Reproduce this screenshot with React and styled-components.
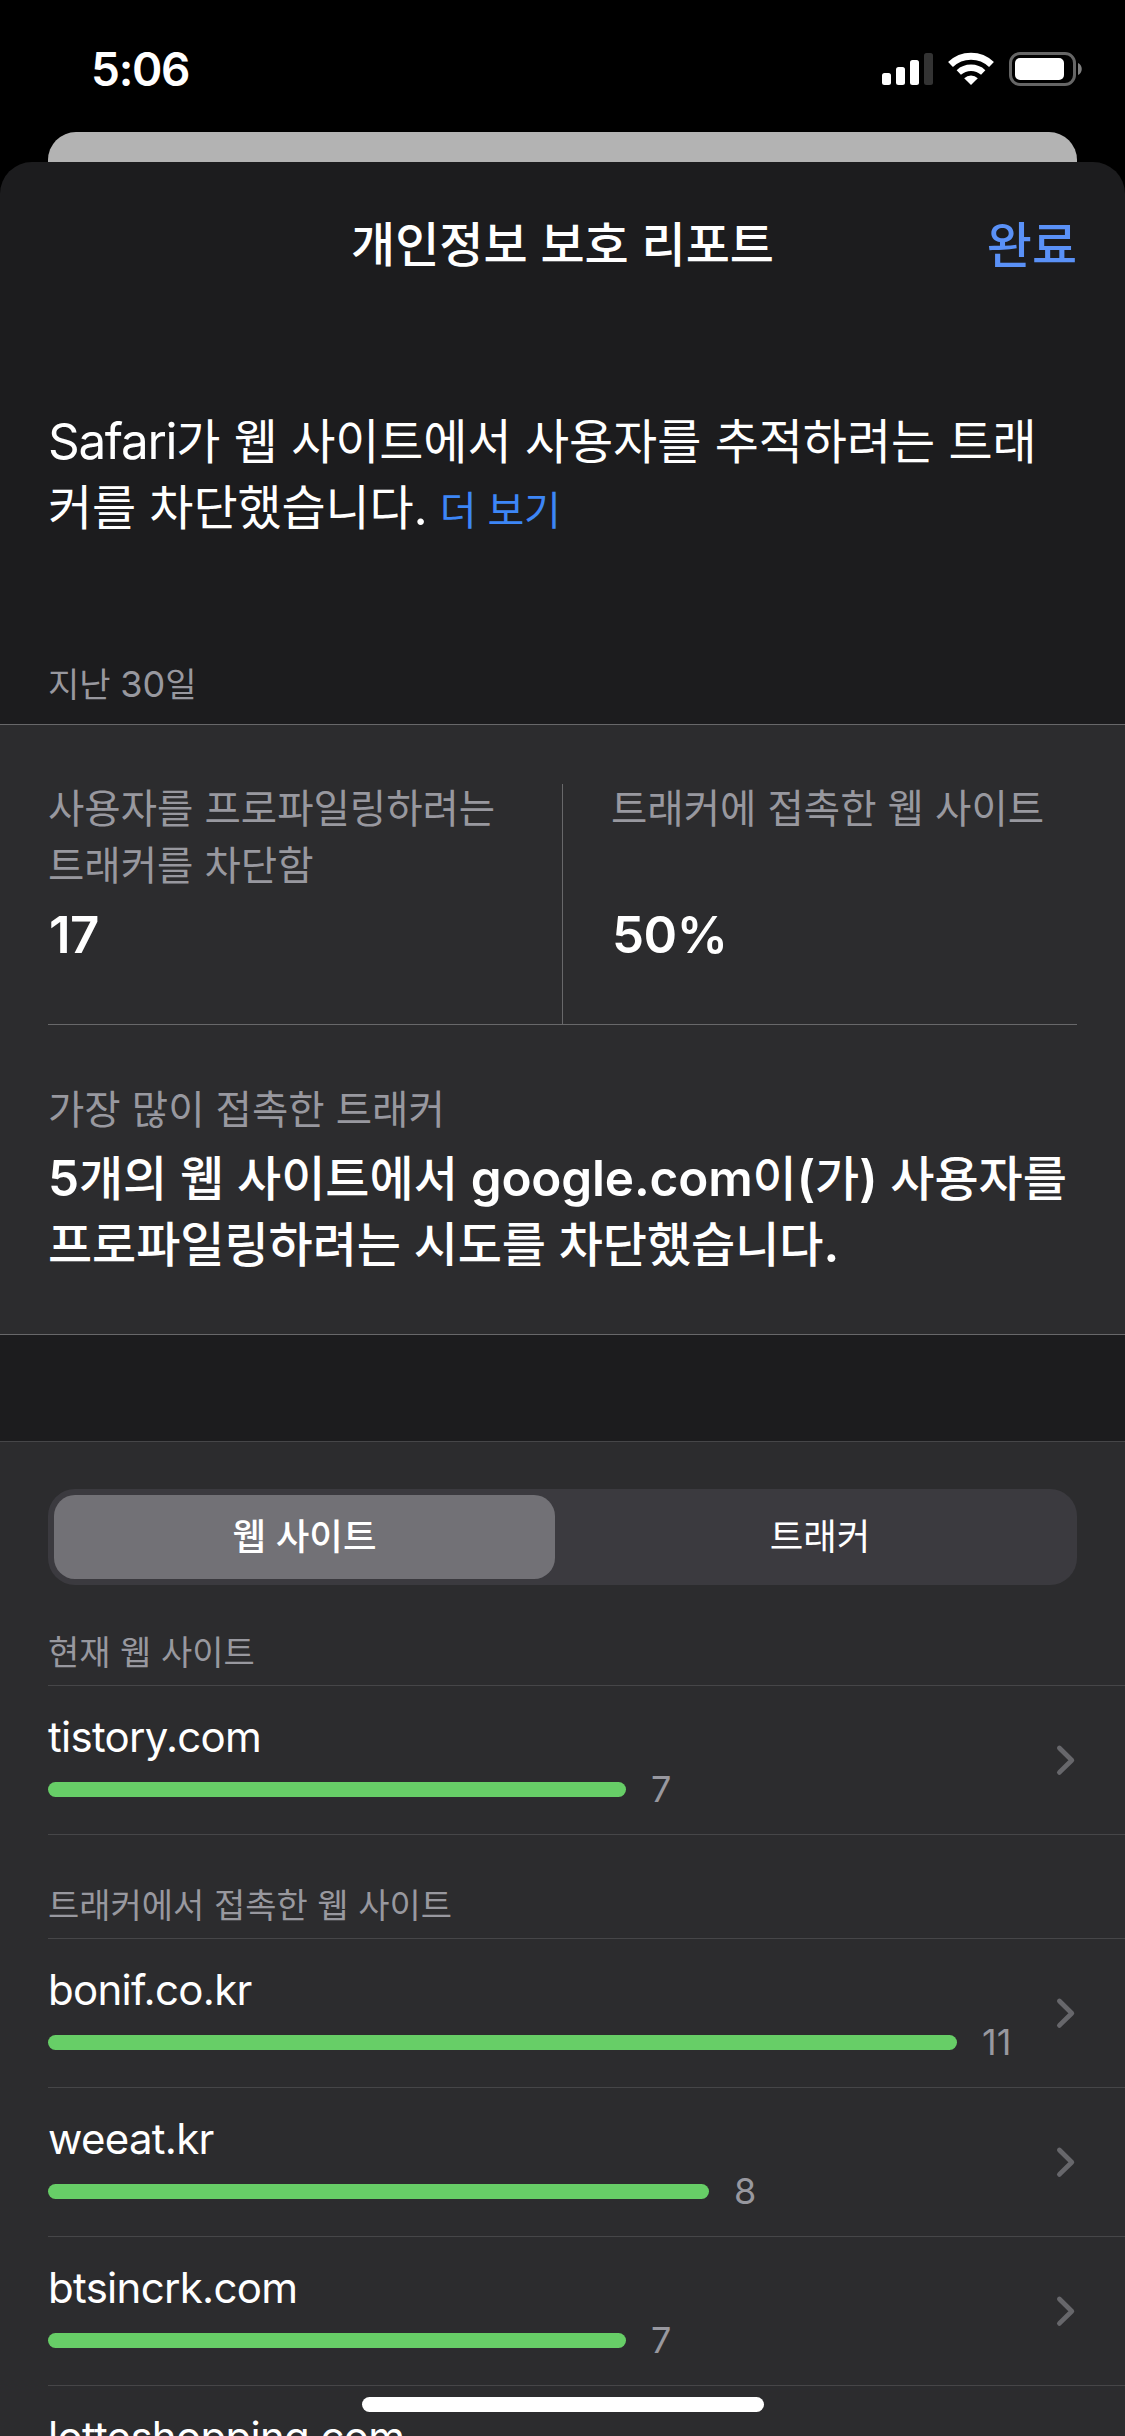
import React from "react";
import styled, { createGlobalStyle } from "styled-components";

const GlobalStyle = createGlobalStyle`
  * { box-sizing: border-box; }
  html, body { margin: 0; padding: 0; background: #000; }
  body {
    font-family: "Inter", "Noto Sans CJK KR", sans-serif;
    color: #fff;
    -webkit-font-smoothing: antialiased;
  }
`;

const Screen = styled.div`
  position: relative;
  width: 1125px;
  height: 2436px;
  overflow: hidden;
  background: #000;
  display: flex;
  flex-direction: column;
`;

const StatusBar = styled.header`
  height: 132px;
  flex: none;
  padding: 41px 43px 0 91px;
  display: flex;
  justify-content: space-between;
  align-items: flex-start;
`;

const Clock = styled.span`
  font-size: 46px;
  line-height: 56px;
  font-weight: 600;
  letter-spacing: -1.3px;
`;

const StatusIcons = styled.svg`
  display: block;
  width: 201px;
  height: 36px;
  margin-top: 10px;
`;

const BackCard = styled.div`
  height: 30px;
  flex: none;
  margin: 0 48px;
  border-radius: 28px 28px 0 0;
  background: #b3b3b3;
`;

const Sheet = styled.main`
  flex: 1;
  border-radius: 32px 32px 0 0;
  background: #1c1c1e;
  overflow: hidden;
`;

const SheetHeader = styled.div`
  display: grid;
  grid-template-columns: 1fr auto 1fr;
  padding: 53px 48px 0;
  height: 168px;
`;

const Title = styled.h1`
  grid-column: 2;
  margin: 0;
  font-size: 48px;
  line-height: 60px;
  font-weight: 500;
  white-space: nowrap;
`;

const DoneButton = styled.button`
  justify-self: end;
  align-self: start;
  padding: 0;
  border: 0;
  background: none;
  font-family: inherit;
  font-size: 49px;
  line-height: 62px;
  font-weight: 500;
  color: #5a91f7;
`;

const LatinRun = styled.span`
  font-size: 1.03em;
  line-height: 0;
  letter-spacing: -0.027em;
`;

const Line = styled.span`
  display: block;
  white-space: nowrap;
  letter-spacing: ${(p) => p.$tracking || 0}px;
`;

const Intro = styled.p`
  margin: 79px 48px 0;
  font-size: 48px;
  line-height: 66px;
`;

const MoreLink = styled.a`
  font-size: 40px;
  line-height: 0;
  color: #3d86f6;
`;

const PeriodLabel = styled.h2`
  margin: 122px 48px 17px;
  font-size: 34px;
  line-height: 44px;
  font-weight: 400;
  color: #98989f;

  ${LatinRun} {
    font-size: 1.06em;
    letter-spacing: 0;
  }
`;

const Summary = styled.section`
  border-top: 1px solid #68686a;
  border-bottom: 1px solid #68686a;
  background: #2c2c2e;
  padding: 56px 48px 56px;
`;

const Stats = styled.div`
  display: grid;
  grid-template-columns: 514px 1px 1fr;
  height: 244px;
  border-bottom: 1px solid #68686a;
`;

const StatDivider = styled.div`
  margin-top: 3px;
  background: #68686a;
`;

const Stat = styled.div`
  padding-left: ${(p) => (p.$inset ? 48 : 0)}px;
`;

const Label = styled.div`
  min-height: ${(p) => (p.$lines || 1) * 57}px;
  font-size: 39.5px;
  line-height: 57px;
  color: #98989f;
`;

const StatValue = styled.div`
  margin-top: 10px;
  padding-left: 1px;
  font-size: 51px;
  line-height: 60px;
  font-weight: 600;
  letter-spacing: -0.5px;
`;

const TopTracker = styled.div`
  padding-top: 57px;
`;

const TopTrackerText = styled.p`
  margin: 7px 0 0;
  font-size: 48px;
  line-height: 66px;
  font-weight: 500;

  ${LatinRun} {
    font-weight: 600;
    letter-spacing: -0.003em;
  }
`;

const Details = styled.section`
  margin-top: 106px;
  border-top: 1px solid #464648;
  background: #2c2c2e;
  padding: 47px 0 0 48px;
  height: 1100px;
`;

const Segmented = styled.div`
  display: grid;
  grid-template-columns: 501px 1fr;
  width: 1029px;
  height: 96px;
  padding: 6px;
  border-radius: 27px;
  background: #3b3a3f;
`;

const Segment = styled.button`
  border: 0;
  padding: 0 0 0 ${(p) => (p.$active ? 0 : 14)}px;
  border-radius: 21px;
  background: ${(p) => (p.$active ? "#727176" : "transparent")};
  color: #fff;
  font-family: inherit;
  font-size: 36.5px;
  line-height: 44px;
  font-weight: ${(p) => (p.$active ? 500 : 400)};
`;

const GroupHeader = styled.h3`
  display: flex;
  align-items: flex-end;
  margin: 0;
  height: ${(p) => p.$height}px;
  padding-bottom: 10px;
  font-size: 34px;
  line-height: 44px;
  font-weight: 400;
  color: #98989f;
`;

const Rows = styled.ul`
  margin: 0;
  padding: 0;
  list-style: none;
  border-bottom: ${(p) => (p.$closed ? "1px solid #464648" : "0")};
`;

const Row = styled.li`
  display: flex;
  justify-content: space-between;
  height: 149px;
  padding-right: 47px;
  border-top: 1px solid #464648;
`;

const RowBody = styled.div`
  padding-top: 24px;
`;

const SiteName = styled.div`
  font-size: 42px;
  line-height: 54px;
  letter-spacing: -0.7px;
`;

const Meter = styled.div`
  display: flex;
  align-items: center;
  gap: 25px;
  height: 43px;
  margin-top: 4px;
`;

const Bar = styled.div`
  height: 15px;
  border-radius: 7.5px;
  background: #67ce67;
`;

const Count = styled.span`
  font-size: 36px;
  line-height: 43px;
  color: #98989f;
`;

const Chevron = styled.svg`
  display: block;
  width: 22px;
  height: 34px;
  margin-top: 58px;
`;

const HomeIndicator = styled.div`
  position: absolute;
  left: 362px;
  bottom: 24px;
  width: 402px;
  height: 15px;
  border-radius: 8px;
  background: #fff;
`;

/* Latin letters and digits sit slightly larger than the Hangul beside them. */
function Mixed({ children }) {
  return children
    .split(/([A-Za-z0-9.()%]+)/)
    .map((part, i) => (i % 2 ? <LatinRun key={i}>{part}</LatinRun> : part));
}

const UNIT = 82.6;

const current = [{ name: "tistory.com", count: 7 }];
const contacted = [
  { name: "bonif.co.kr", count: 11 },
  { name: "weeat.kr", count: 8 },
  { name: "btsincrk.com", count: 7 },
  { name: "lotteshopping.com", count: 6 },
];

function SiteRow({ site }) {
  return (
    <Row>
      <RowBody>
        <SiteName>{site.name}</SiteName>
        <Meter>
          <Bar style={{ width: Math.round(site.count * UNIT) }} />
          <Count>{site.count}</Count>
        </Meter>
      </RowBody>
      <Chevron viewBox="0 0 22 34">
        <path
          d="M3.4 4 L15.8 16.2 L3.4 28.4"
          fill="none"
          stroke="#67676b"
          strokeWidth="4.8"
          strokeLinecap="round"
          strokeLinejoin="round"
        />
      </Chevron>
    </Row>
  );
}

export default function App() {
  return (
    <Screen>
      <GlobalStyle />
      <StatusBar>
        <Clock>5:06</Clock>
        <StatusIcons viewBox="0 0 201 36">
          <rect x="1" y="22" width="9" height="12" rx="2.5" fill="#fff" />
          <rect x="15" y="16" width="9" height="18" rx="2.5" fill="#fff" />
          <rect x="29" y="9" width="9" height="25" rx="2.5" fill="#fff" />
          <rect x="43" y="2" width="9" height="32" rx="2.5" fill="#333" />
          <g fill="none" stroke="#fff" strokeWidth="7">
            <path d="M69.5 13.5 A29.5 29.5 0 0 1 110.5 13.5" />
            <path d="M77.8 21.5 A18.2 18.2 0 0 1 102.2 21.5" strokeWidth="6.4" />
          </g>
          <path d="M90 34 L83.2 27.2 A10 10 0 0 1 96.8 27.2 Z" fill="#fff" />
          <rect x="129.5" y="2.5" width="64" height="31" rx="9.5" fill="none" stroke="#666" strokeWidth="3" />
          <rect x="134" y="7" width="49" height="22" rx="5" fill="#fff" />
          <path d="M197 12 C202 14 202 22 197 24 Z" fill="#808080" />
        </StatusIcons>
      </StatusBar>
      <BackCard />
      <Sheet>
        <SheetHeader>
          <Title>개인정보 보호 리포트</Title>
          <DoneButton>완료</DoneButton>
        </SheetHeader>
        <Intro>
          <Line $tracking={-0.08}><Mixed>Safari가 웹 사이트에서 사용자를 추적하려는 트래</Mixed></Line>
          <Line $tracking={-0.15}>
            <Mixed>커를 차단했습니다.</Mixed> <MoreLink>더 보기</MoreLink>
          </Line>
        </Intro>
        <PeriodLabel><Mixed>지난 30일</Mixed></PeriodLabel>
        <Summary>
          <Stats>
            <Stat>
              <Label $lines={2}>
                <Line>사용자를 프로파일링하려는</Line>
                <Line>트래커를 차단함</Line>
              </Label>
              <StatValue>17</StatValue>
            </Stat>
            <StatDivider />
            <Stat $inset>
              <Label $lines={2}>
                <Line>트래커에 접촉한 웹 사이트</Line>
              </Label>
              <StatValue>50%</StatValue>
            </Stat>
          </Stats>
          <TopTracker>
            <Label>가장 많이 접촉한 트래커</Label>
            <TopTrackerText>
              <Line><Mixed>5개의 웹 사이트에서 google.com이(가) 사용자를</Mixed></Line>
              <Line $tracking={-0.05}><Mixed>프로파일링하려는 시도를 차단했습니다.</Mixed></Line>
            </TopTrackerText>
          </TopTracker>
        </Summary>
        <Details>
          <Segmented>
            <Segment $active>웹 사이트</Segment>
            <Segment>트래커</Segment>
          </Segmented>
          <GroupHeader $height={100}>현재 웹 사이트</GroupHeader>
          <Rows $closed>
            {current.map((site) => <SiteRow key={site.name} site={site} />)}
          </Rows>
          <GroupHeader $height={103}>트래커에서 접촉한 웹 사이트</GroupHeader>
          <Rows>
            {contacted.map((site) => <SiteRow key={site.name} site={site} />)}
          </Rows>
        </Details>
      </Sheet>
      <HomeIndicator />
    </Screen>
  );
}
